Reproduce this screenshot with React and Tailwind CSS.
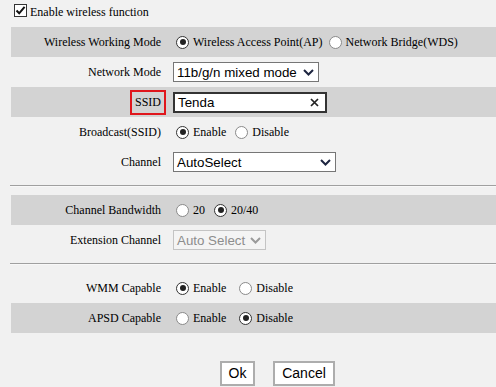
import React from 'react'

const Radio = ({ checked }) => (
  <span
    className={`inline-flex items-center justify-center w-[13px] h-[13px] rounded-full bg-white border ${
      checked ? 'border-[#333]' : 'border-[#8a8a8a]'
    }`}
  >
    {checked && <span className="w-[6px] h-[6px] rounded-full bg-[#222]" />}
  </span>
)

const Chevron = ({ color = '#1d2540' }) => (
  <svg width="11" height="7" viewBox="0 0 11 7">
    <path d="M1 1 L5.5 5.5 L10 1" fill="none" stroke={color} strokeWidth="2" />
  </svg>
)

const Row = ({ gray, label, children }) => (
  <div className={`flex items-center h-[30px] ${gray ? 'bg-[#d3d3d3]' : ''}`}>
    <div className="w-[150px] text-right">{label}</div>
    <div className="ml-[12px] flex items-center">{children}</div>
  </div>
)

const Opt = ({ checked, text, className = '' }) => (
  <span className={`flex items-center ${className}`}>
    <Radio checked={checked} />
    <span className="ml-[4px]">{text}</span>
  </span>
)

const Select = ({ value, width, disabled }) => (
  <div
    className={`flex items-center justify-between h-[20px] pl-[3px] pr-[4px] font-['Liberation_Sans',sans-serif] text-[13.33px] border ${
      disabled ? 'border-[#c4c4c4] bg-[#f4f4f4] text-[#8d8d8d] h-[19px]' : 'border-[#767676] bg-white text-black'
    } ${width}`}
  >
    <span>{value}</span>
    <Chevron color={disabled ? '#9a9a9a' : '#1d2540'} />
  </div>
)

const Divider = () => (
  <div className="ml-[-1px] my-[8px] border-t border-t-[#a0a0a0] border-b border-b-[#f8f8f8]" />
)

export default function App() {
  return (
    <div className="w-[496px] h-[387px] bg-[#f1f1f1] overflow-hidden font-['Liberation_Serif',serif] text-[12px] leading-[15px] text-black">
      <div className="h-[27px] pl-[14px] pt-[4px] flex items-start">
        <span className="w-[13px] h-[13px] bg-white border border-[#333] flex items-center justify-center">
          <svg width="11" height="11" viewBox="0 0 11 11">
            <path d="M1.5 5.5 L4.2 8.3 L9.6 1.8" fill="none" stroke="#111" strokeWidth="2" />
          </svg>
        </span>
        <span className="ml-[3px] mt-[1px]">Enable wireless function</span>
      </div>

      <div className="ml-[11px]">
        <Row gray label="Wireless Working Mode">
          <Opt checked text="Wireless Access Point(AP)" className="ml-[3px]" />
          <Opt text="Network Bridge(WDS)" className="ml-[6px]" />
        </Row>
        <Row label="Network Mode">
          <Select value="11b/g/n mixed mode" width="w-[146px]" />
        </Row>
        <Row gray
          label={
            <span className="inline-block -mr-[5px] border-2 border-[#e0161c] px-[3px] py-[3px]">SSID</span>
          }
        >
          <div className="flex items-center justify-between w-[154px] h-[21px] bg-white border-2 border-[#333] pl-[3px] pr-[6px] font-['Liberation_Sans',sans-serif] text-[13.33px] text-black">
            <span>Tenda</span>
            <svg width="9" height="9" viewBox="0 0 9 9">
              <path d="M1 1 L8 8 M8 1 L1 8" stroke="#222" strokeWidth="1.7" />
            </svg>
          </div>
        </Row>
        <Row label="Broadcast(SSID)">
          <Opt checked text="Enable" className="ml-[3px]" />
          <Opt text="Disable" className="ml-[9px]" />
        </Row>
        <Row label="Channel">
          <Select value="AutoSelect" width="w-[163px]" />
        </Row>

        <Divider />

        <Row gray label="Channel Bandwidth">
          <Opt text="20" className="ml-[3px]" />
          <Opt checked text="20/40" className="ml-[9px]" />
        </Row>
        <Row label="Extension Channel">
          <Select value="Auto Select" width="w-[93px]" disabled />
        </Row>

        <Divider />

        <Row label="WMM Capable">
          <Opt checked text="Enable" className="ml-[3px]" />
          <Opt text="Disable" className="ml-[13px]" />
        </Row>
        <Row gray label="APSD Capable">
          <Opt text="Enable" className="ml-[3px]" />
          <Opt checked text="Disable" className="ml-[13px]" />
        </Row>
      </div>

      <div className="mt-[28px] pl-[220px] flex gap-[18px] font-['Liberation_Sans',sans-serif] text-[14px] text-black">
        <button className="w-[35px] h-[25px] bg-white border-2 border-[#adadad]">Ok</button>
        <button className="w-[62px] h-[25px] bg-white border-2 border-[#adadad]">Cancel</button>
      </div>
    </div>
  )
}
